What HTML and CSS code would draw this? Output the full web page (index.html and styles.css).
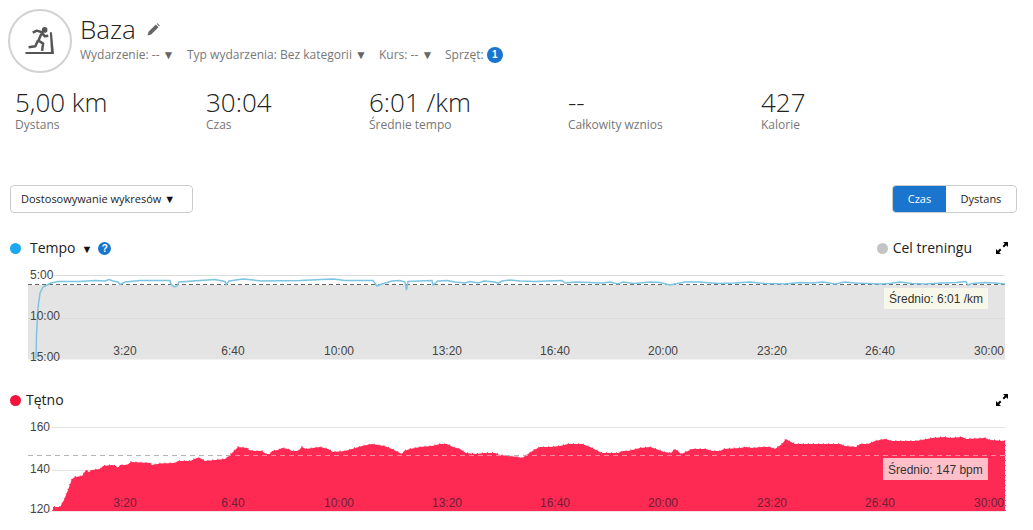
FILE: index.html
```html
<!DOCTYPE html>
<html lang="pl">
<head>
<meta charset="utf-8">
<title>Baza</title>
<link rel="stylesheet" href="styles.css">
</head>
<body>
<header class="head">
  <div class="badge">
    <svg width="32" height="28" viewBox="25 28 30 27">
      <circle cx="44.5" cy="30.8" r="2.7" fill="#555"/>
      <path d="M33 33.5 L37 31.5 L42 33 L38.5 41 L43 44 L42 51 M42 33.5 L44.5 37 L48 36.5 M38 41 L35.5 46.5 L29 47.5" fill="none" stroke="#555" stroke-width="2.4" stroke-linejoin="round"/>
      <path d="M26 54 L26 52 L50.6 52 L49.5 33 L51.5 33 L53.5 54 Z" fill="#555"/>
    </svg>
  </div>
  <div class="head-main">
    <div class="title-row">
      <h1 class="title">Baza</h1>
      <svg class="pencil" width="13" height="13" viewBox="0 0 13 13"><path d="M0.5 12.5 L1.5 8.8 L8.8 1.5 L11.500 4.200 L4.200 11.500 Z M9.600 0.700 L10.400 0.200 L12.800 2.600 L12.300 3.400 Z" fill="#666"/></svg>
    </div>
    <div class="filters">
      <span class="filter f-event">Wydarzenie: -- <i class="caret">▼</i></span>
      <span class="filter f-type">Typ wydarzenia: Bez kategorii <i class="caret">▼</i></span>
      <span class="filter f-course">Kurs: -- <i class="caret">▼</i></span>
      <span class="filter">Sprzęt: <b class="count">1</b></span>
    </div>
  </div>
</header>

<section class="stats">
  <div class="stat"><div class="value">5,00 km</div><div class="label">Dystans</div></div>
  <div class="stat"><div class="value">30:04</div><div class="label">Czas</div></div>
  <div class="stat"><div class="value">6:01 /km</div><div class="label">Średnie tempo</div></div>
  <div class="stat"><div class="value">--</div><div class="label">Całkowity wznios</div></div>
  <div class="stat"><div class="value">427</div><div class="label">Kalorie</div></div>
</section>

<div class="toolbar">
  <button class="btn">Dostosowywanie wykresów <i class="btn-caret">▼</i></button>
  <div class="segment">
    <span class="seg seg-on">Czas</span>
    <span class="seg">Dystans</span>
  </div>
</div>

<section class="chart chart-pace">
  <div class="chart-head">
    <span class="dot dot-blue"></span>
    <span class="chart-title title-pace">Tempo</span>
    <i class="chart-caret">▼</i>
    <span class="help">?</span>
    <span class="spacer"></span>
    <span class="dot dot-gray"></span>
    <span class="chart-title">Cel treningu</span>
    <svg class="expand" width="12" height="12" viewBox="0 0 12 12"><path d="M7 0 H12 V5 L10.2 3.2 L8 5.4 L6.6 4 L8.8 1.8 Z M0 12 V7 L1.8 8.8 L4 6.6 L5.4 8 L3.2 10.2 L5 12 Z" fill="#000"/></svg>
  </div>
  <svg class="plot" width="1033" height="100" viewBox="0 265 1033 100">
    <rect x="28" y="285" width="977" height="74.5" fill="#e4e4e4"/>
    <path d="M54 275.5 H1005 M58 318.5 H1005" stroke="#dcdcdc" fill="none"/>
    <path d="M28 318.5 H54" stroke="#d4d4d4" fill="none"/>
    <path d="M28 284.5 H1005" stroke="#666" stroke-dasharray="4 3" fill="none"/>
    <path class="pace" d="M36 359 L36.5 335 L38 308 L40 293 L43 287 L47 285 L51 283 L58 281.5 L80 281.5 L95 280.5 L105 281 L109 279.5 L113 281 L118 282 L120 284.5 L125 282 L140 280.5 L170 280.5 L171 284 L174 287 L177 286 L179 282 L200 280.5 L215 279.5 L225 281.5 L226 284.5 L229 281 L243 279 L262 281 L300 280.5 L333 279 L345 280.5 L373 280.5 L377 286 L382 284 L392 281 L400 280.5 L405 282 L406.500 290 L408 281.500 L432 280.500 L433 285 L438 281 L447 280.500 L455 282 L465 283 L470 281.500 L478 283 L484 281 L495 282 L498 283.500 L502 281 L510 280 L520 281 L535 281.500 L548 281 L562 280.500 L565 283 L575 282 L590 282.500 L602 283 L610 282 L618 284 L623 282 L634 283.500 L650 282 L660 282.500 L670 285 L685 282 L700 282 L712 283 L720 283.500 L735 283 L750 282 L765 283.500 L785 284 L800 282.500 L812 283 L823 282 L835 284 L845 282 L855 283 L868 283.500 L880 284 L890 283.500 L900 282 L912 283.500 L925 284 L942 283 L956 282.500 L966 281.500 L968 285 L972 283.500 L985 282.500 L995 283 L1005 284" fill="none"/>
    <g class="axis">
      <text x="30" y="279">5:00</text>
      <text x="30" y="320">10:00</text>
      <text x="30" y="361">15:00</text>
      <text class="mid" x="125" y="355">3:20</text>
      <text class="mid" x="233" y="355">6:40</text>
      <text class="mid" x="339" y="355">10:00</text>
      <text class="mid" x="447" y="355">13:20</text>
      <text class="mid" x="555" y="355">16:40</text>
      <text class="mid" x="663" y="355">20:00</text>
      <text class="mid" x="772" y="355">23:20</text>
      <text class="mid" x="880" y="355">26:40</text>
      <text class="mid" x="989" y="355">30:00</text>
    </g>
    <rect x="884" y="288" width="104" height="21" fill="#f8f8ea"/>
    <text class="tip" x="889" y="303">Średnio: 6:01 /km</text>
  </svg>
</section>

<section class="chart chart-hr">
  <div class="chart-head">
    <span class="dot dot-red"></span>
    <span class="chart-title title-hr">Tętno</span>
    <span class="spacer"></span>
    <svg class="expand" width="12" height="12" viewBox="0 0 12 12"><path d="M7 0 H12 V5 L10.2 3.2 L8 5.4 L6.6 4 L8.8 1.8 Z M0 12 V7 L1.8 8.8 L4 6.6 L5.4 8 L3.2 10.2 L5 12 Z" fill="#000"/></svg>
  </div>
  <svg class="plot" width="1033" height="100" viewBox="0 417 1033 100">
    <path d="M52 427.5 H1005 M52 470.5 H1005" stroke="#e2e2e2" fill="none"/>
    <path d="M28 455.500 H1005" stroke="#777" stroke-dasharray="5 4" fill="none"/>
    <path class="hr" d="M53 511 L53 507 L60 507 L64 500 L68 490 L72 479 L75 477 L82 476 L84 473 L86 470 L89 472 L92 470 L100 469 L103 466 L112 465 L116 466 L118 468 L120 465 L127 465 L131 462 L150 463 L152 465 L160 463.500 L175 463 L178 461 L190 461 L197 458 L200 458 L205 461 L215 460 L225 459 L229 456 L233 452 L238 447 L247 448 L249 450 L254 451 L262 451 L266 454 L270 454 L272 451 L278 450 L282 448 L288 449 L292 451 L298 451 L302 447 L306 449 L320 447 L328 449 L333 452 L345 451 L352 449 L362 446 L372 444 L378 445 L384 446 L392 449 L398 452 L402 454 L404 451 L410 449 L420 447 L432 446 L440 444 L447 444 L453 447 L460 449 L466 453 L475 454 L485 453 L495 453 L500 455 L507 456 L518 457 L522 458 L528 454 L534 450 L540 447 L550 447 L560 446 L568 444 L582 444 L590 447 L596 450 L602 453 L618 453 L623 451 L628 451 L640 448 L650 447 L656 449 L664 452 L671 453 L675 449 L679 452 L681 454 L688 451 L692 449 L706 449 L712 451 L720 451 L724 449 L740 448 L746 447 L752 448 L762 447 L770 447 L775 449 L782 444 L786 439 L789 441 L795 444 L840 444 L845 446 L856 447 L860 444 L868 444 L875 441 L885 439 L892 441 L915 441 L922 440 L932 438 L945 437 L950 438 L962 437 L966 439 L985 438 L990 440 L1005 441 L1005 511 Z"/>
    <rect x="28" y="511" width="977" height="6" fill="#fff"/>
    <path d="M28 511.500 H1005" stroke="#f0e6e8" fill="none"/>
    <path d="M28 455.500 H1005" stroke="#fff" stroke-opacity=".45" stroke-dasharray="5 4" fill="none"/>
    <g class="axis">
      <text x="30" y="431">160</text>
      <text x="30" y="473">140</text>
      <text x="30" y="513">120</text>
    </g>
    <g class="axis axis-on-red">
      <text class="mid" x="125" y="507">3:20</text>
      <text class="mid" x="233" y="507">6:40</text>
      <text class="mid" x="339" y="507">10:00</text>
      <text class="mid" x="447" y="507">13:20</text>
      <text class="mid" x="555" y="507">16:40</text>
      <text class="mid" x="663" y="507">20:00</text>
      <text class="mid" x="772" y="507">23:20</text>
      <text class="mid" x="880" y="507">26:40</text>
      <text class="mid" x="989" y="507">30:00</text>
    </g>
    <rect x="883" y="458" width="105" height="22" fill="#ffbfc9"/>
    <text class="tip" x="888" y="474">Średnio: 147 bpm</text>
  </svg>
</section>
</body>
</html>
```
FILE: styles.css
```css
* { box-sizing: border-box; }
html, body { margin: 0; padding: 0; background: #fff; }
body { font-family: "Open Sans", sans-serif; color: #222; width: 1033px; height: 530px; overflow: hidden; }
i { font-style: normal; }

.head { display: flex; padding: 9px 0 0 8px; height: 88px; }
.badge { width: 64px; height: 64px; border: 2px solid #d2d2d2; border-radius: 50%; display: flex; align-items: center; justify-content: center; }
.head-main { margin-left: 8px; }
.title-row { display: flex; align-items: center; height: 36px; margin-top: 2px; }
.title { margin: 0; font-size: 26px; font-weight: 300; line-height: 36px; color: #222; }
.pencil { margin: 0 0 0 11px; }
.filters { display: flex; font-size: 12px; color: #777; line-height: 18px; margin-top: -1px; }
.filter { display: flex; align-items: center; white-space: pre; }
.f-event { width: 107px; }
.f-type { width: 192px; }
.f-course { width: 66px; }
.caret { font-size: 12px; line-height: 1; color: #666; }
.count { width: 16px; height: 16px; border-radius: 50%; background: #1a75cf; color: #fff; font: bold 10px/16px "Liberation Sans", sans-serif; text-align: center; }

.stats { display: grid; grid-template-columns: 190px 163px 199px 193px 1fr; padding-left: 16px; height: 97px; }
.value { font-size: 26px; font-weight: 300; line-height: 28px; color: #222; }
.label { font-size: 12px; line-height: 16px; color: #777; margin-top: 1px; }
.stat:first-child .value, .stat:first-child .label { margin-left: -1px; }

.toolbar { display: flex; justify-content: space-between; padding: 0 16px 0 10px; height: 28px; }
.btn { width: 183px; height: 28px; border: 1px solid #ccc; border-radius: 4px; background: #fff; font: 11px/26px "Open Sans", sans-serif; color: #222; text-align: left; padding: 0 0 0 10px; white-space: pre; }
.btn-caret { font-size: 11px; line-height: 1; color: #111; }
.segment { display: flex; width: 125px; border: 1px solid #ccc; border-radius: 4px; overflow: hidden; font-size: 11px; line-height: 26px; }
.seg { flex: 1; text-align: center; color: #222; }
.seg-on { flex: 0 0 53px; background: #1a75cf; color: #fff; }

.chart-pace { margin-top: 27px; }
.chart-hr { margin-top: 27px; }
.chart-head { display: flex; align-items: center; height: 16px; padding: 0 25px 0 10px; font-size: 14px; margin-bottom: 9px; }
.chart-title { color: #222; line-height: 16px; }
.title-pace { margin-left: 9px; }
.title-hr { margin-left: 5px; }
.chart-caret { font-size: 11px; line-height: 1; margin-left: 6px; color: #111; }
.help { width: 13px; height: 13px; border-radius: 50%; background: #1a75cf; color: #fff; font: bold 10px/13px "Liberation Sans", sans-serif; text-align: center; margin-left: 6px; }
.spacer { flex: 1; }
.dot { width: 11px; height: 11px; border-radius: 50%; flex: none; }
.dot-blue { background: #1ca8f0; }
.dot-red { background: #f5123d; }
.dot-gray { background: #c4c4c4; margin-right: 5px; }
.expand { margin-left: 24px; }
.plot { display: block; }
.pace { stroke: #7cc4e2; stroke-width: 1.5; }
.hr { fill: #ff2a54; stroke: #ff2a54; stroke-width: 1.6; stroke-dasharray: 1 4; }
.axis text { font: 12px "Liberation Sans", sans-serif; fill: #444; }
.axis .mid { text-anchor: middle; }
.axis-on-red text { fill: #6e1f33; }
.tip { font: 12px "Liberation Sans", sans-serif; fill: #333; }
```
